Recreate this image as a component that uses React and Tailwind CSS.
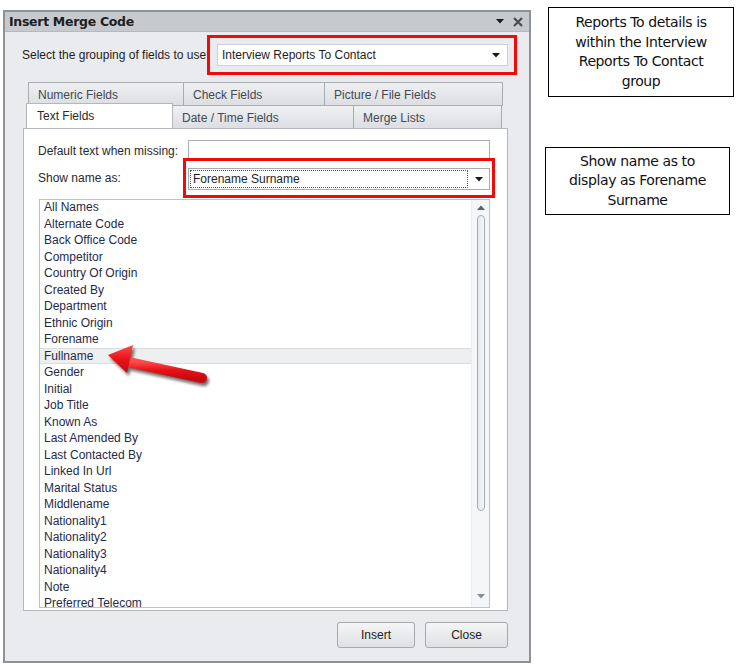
const fields = [
  'All Names',
  'Alternate Code',
  'Back Office Code',
  'Competitor',
  'Country Of Origin',
  'Created By',
  'Department',
  'Ethnic Origin',
  'Forename',
  'Fullname',
  'Gender',
  'Initial',
  'Job Title',
  'Known As',
  'Last Amended By',
  'Last Contacted By',
  'Linked In Url',
  'Marital Status',
  'Middlename',
  'Nationality1',
  'Nationality2',
  'Nationality3',
  'Nationality4',
  'Note',
  'Preferred Telecom',
]

function DropArrow() {
  return (
    <svg width="8" height="5" viewBox="0 0 8 5" className="shrink-0">
      <path d="M0 0 L8 0 L4 4.5 Z" fill="#1b1b1b" />
    </svg>
  )
}

function Tab({ label, width, active }) {
  if (active) {
    return (
      <div
        className="h-[25px] -mt-[2px] bg-white border border-b-0 border-[#b4b7bc] flex items-center pl-[10px] text-[#2a2a2a] relative z-10"
        style={{ width }}
      >
        {label}
      </div>
    )
  }
  return (
    <div
      className="h-[24px] bg-gradient-to-b from-[#eef0f2] to-[#dcdee2] border border-[#a9acb1] flex items-center pl-[9px] pt-[1px] text-[#444a52] -ml-px first:ml-0"
      style={{ width }}
    >
      {label}
    </div>
  )
}

function Button({ label, width }) {
  return (
    <div
      className="h-[26px] rounded-[3px] border border-[#a6a8ad] bg-gradient-to-b from-[#f4f5f6] to-[#dfe1e4] flex items-center justify-center text-[#222]"
      style={{ width }}
    >
      {label}
    </div>
  )
}

function RedArrow() {
  return (
    <svg
      width="120"
      height="50"
      viewBox="0 0 120 50"
      className="absolute left-[100px] top-[339px] z-20"
    >
      <defs>
        <filter id="sh" x="-20%" y="-40%" width="140%" height="180%">
          <feGaussianBlur stdDeviation="1.6" />
        </filter>
        <linearGradient id="rg" x1="0" y1="0" x2="0" y2="1">
          <stop offset="0" stopColor="#ff4a4a" />
          <stop offset="0.5" stopColor="#e8121a" />
          <stop offset="1" stopColor="#c80a10" />
        </linearGradient>
      </defs>
      <g filter="url(#sh)" opacity="0.6" transform="translate(2 3)">
        <line x1="28" y1="23" x2="102" y2="39" stroke="#111" strokeWidth="10" strokeLinecap="round" />
        <polygon points="8,16 33,6 27,34" fill="#111" />
      </g>
      <line x1="28" y1="23" x2="102" y2="39" stroke="url(#rg)" strokeWidth="10" strokeLinecap="round" />
      <polygon points="8,16 33,6 27,34" fill="url(#rg)" />
    </svg>
  )
}

export default function App() {
  return (
    <div className="relative w-[736px] h-[666px] bg-white flex items-start font-['Liberation_Sans',Arial,sans-serif] text-[12px] leading-none">
      <div className="ml-[3px] mt-[10px] w-[528px] h-[653px] border-2 border-[#8e9196] bg-[#e9ebee] flex flex-col shrink-0">
        <div className="h-[20px] bg-[#c6cacf] flex items-center justify-between pl-[4px] pr-[6px] border-b border-[#b5b9bf]">
          <span className="font-bold text-[12.5px] text-[#1e1e1e] font-['DejaVu_Sans',sans-serif] tracking-[-0.3px] mt-[1px]">
            Insert Merge Code
          </span>
          <div className="flex items-center gap-[9px]">
            <DropArrow />
            <svg width="10" height="10" viewBox="0 0 10 10">
              <path d="M1 1 L9 9 M9 1 L1 9" stroke="#4a4d52" strokeWidth="2.2" />
            </svg>
          </div>
        </div>

        <div className="flex items-center mt-[12px] pl-[17px]">
          <span className="w-[195px] text-[#1e1e1e]">Select the grouping of fields to use:</span>
          <div className="w-[291px] h-[22px] bg-white border border-[#cdd0d5] flex items-center justify-between pl-[4px] pr-[7px] text-[#1e1e1e]">
            <span>Interview Reports To Contact</span>
            <DropArrow />
          </div>
        </div>

        <div className="mt-[16px] ml-[18px] w-[485px] flex flex-col">
          <div className="flex pl-[5px]">
            <Tab label="Numeric Fields" width={156} />
            <Tab label="Check Fields" width={142} />
            <Tab label="Picture / File Fields" width={179} />
          </div>
          <div className="flex pl-[3px] -mt-px">
            <Tab label="Text Fields" width={147} active />
            <Tab label="Date / Time Fields" width={182} />
            <Tab label="Merge Lists" width={149} />
          </div>

          <div className="-mt-px h-[483px] bg-white border border-[#b4b7bc] pl-[14px] pr-[17px] pt-[11px] flex flex-col">
            <div className="flex items-center h-[21px]">
              <span className="w-[150px] text-[#2a2a2a]">Default text when missing:</span>
              <div className="flex-1 h-[21px] border border-[#abadb3] bg-white" />
            </div>
            <div className="flex items-center h-[22px] mt-[7px]">
              <span className="w-[150px] text-[#2a2a2a] -mt-[2px]">Show name as:</span>
              <div className="flex-1 h-[22px] border border-[#a9abb0] bg-white flex items-center pl-[1px] pr-[6px]">
                <div className="flex-1 h-[18px] border border-dotted border-[#555] flex items-center pl-[2px] text-[#1e1e1e]">
                  Forename Surname
                </div>
                <div className="w-[15px] flex justify-end">
                  <DropArrow />
                </div>
              </div>
            </div>

            <div className="mt-[9px] ml-[1px] h-[409px] border border-[#bfc2c7] bg-white flex overflow-hidden">
              <div className="flex-1 -mt-[1px] flex flex-col">
                {fields.map((f) => (
                  <div
                    key={f}
                    className={
                      f === 'Fullname'
                        ? 'h-[16.5px] shrink-0 flex items-center pl-[4px] text-[#1f2b48] bg-[#eeeff1] border-y border-[#dcdde0]'
                        : 'h-[16.5px] shrink-0 flex items-center pl-[4px] text-[#1f2b48]'
                    }
                  >
                    {f}
                  </div>
                ))}
              </div>
              <div className="w-[18px] bg-[#f5f6f7] border-l border-[#eceef0] flex flex-col items-center pt-[5px] pb-[8px]">
                <svg width="8" height="5" viewBox="0 0 8 5">
                  <path d="M0 5 L8 5 L4 0.5 Z" fill="#5c6068" />
                </svg>
                <div className="mt-[5px] w-[8px] h-[296px] rounded-full border border-[#a7abb2] bg-gradient-to-r from-[#e6e8eb] to-[#f6f7f8]" />
                <div className="flex-1" />
                <svg width="8" height="5" viewBox="0 0 8 5">
                  <path d="M0 0 L8 0 L4 4.5 Z" fill="#8a8e95" />
                </svg>
              </div>
            </div>
          </div>
        </div>

        <div className="flex justify-end gap-[10px] pr-[21px] mt-[11px]">
          <Button label="Insert" width={78} />
          <Button label="Close" width={83} />
        </div>
      </div>

      <div className="ml-[14px] flex flex-col font-['DejaVu_Sans',sans-serif] text-[14px] leading-[19.5px] text-[#111]">
        <div className="ml-[3px] mt-[7px] w-[186px] h-[90px] border border-black flex items-center justify-center text-center px-[20px] tracking-[-0.4px]">
          Reports To details is within the Interview Reports To Contact group
        </div>
        <div className="mt-[50px] w-[185px] h-[68px] border border-black flex items-center justify-center text-center px-[20px] tracking-[-0.4px]">
          Show name as to display as Forename Surname
        </div>
      </div>

      <div className="absolute left-[207px] top-[35px] w-[310px] h-[40px] border-[3px] border-[#f00a0a] z-20" />
      <div className="absolute left-[183px] top-[158px] w-[312px] h-[40px] border-[3px] border-[#f00a0a] z-20" />
      <RedArrow />
    </div>
  )
}
